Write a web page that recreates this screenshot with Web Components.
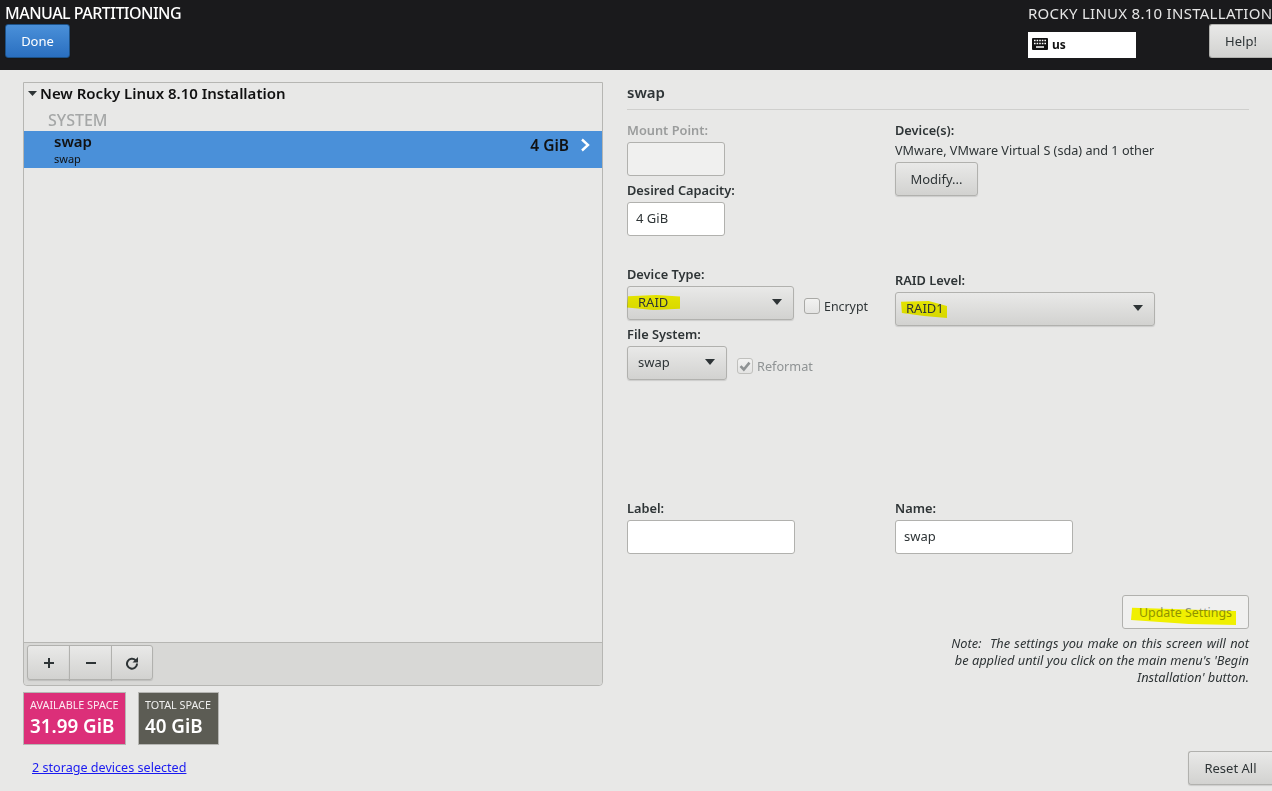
<!DOCTYPE html>
<html lang="en">
<head>
<meta charset="utf-8">
<title>Manual Partitioning</title>
<style>
html,body {margin:0; height:100%;}
body {font:13px "Noto Sans",sans-serif; color:#2e3436; overflow:hidden; background:#e8e8e7;}
</style>
</head>
<body>
<manual-partitioning>
    <top-bar slot="top"></top-bar>
    <mount-pane slot="left"></mount-pane>
    <space-tile slot="tiles" tone="#dc2f79" caption="AVAILABLE SPACE" amount="31.99 GiB" style="width:103px"></space-tile>
    <space-tile slot="tiles" tone="#5c5c54" caption="TOTAL SPACE" amount="40 GiB" style="width:81px"></space-tile>
    <details-pane slot="right"></details-pane>
</manual-partitioning>

<script>
const BUTTON_BG = 'linear-gradient(#e9e9e8,#d2d2d0)';

customElements.define('gtk-button', class extends HTMLElement {
    constructor() {
        super();
        this.attachShadow({ mode: 'open' }).innerHTML = `
        <style>
        :host {
            display:inline-flex; align-items:center; justify-content:center; box-sizing:border-box;
            position:relative;
            height:34px;
            border:1px solid #b1b1ae; border-radius:3px;
            background:${BUTTON_BG};
            box-shadow:0 1px 1px #0000001f;
            color:#2e3436;
        }
        :host([tone=blue]) {
            background:linear-gradient(#4a90d9,#2a6fc0);
            border-color:#1c5187; color:#fff;
        }
        :host([disabled]) {
            background:#f0f0ef; color:#8f9394; box-shadow:none;
        }
        :host([cut]) {
            border-right:0; border-radius:3px 0 0 3px;
        }
        </style>
        <slot></slot>`;
    }
});

customElements.define('gtk-combo', class extends HTMLElement {
    constructor() {
        super();
        this.attachShadow({ mode: 'open' }).innerHTML = `
        <style>
        :host {
            display:flex; align-items:center; box-sizing:border-box;
            position:relative;
            height:34px; padding:0 11px 2px 10px;
            border:1px solid #b1b1ae; border-radius:3px;
            background:${BUTTON_BG};
            box-shadow:0 1px 1px #0000001f;
        }
        span {flex:1; position:relative;}
        svg {width:10px; height:6px; fill:#2e3436; position:relative;}
        </style>
        <slot name="mark"></slot>
        <span><slot></slot></span>
        <svg viewBox="0 0 10 6"><path d="M0 0H10L5 6Z"/></svg>`;
    }
});

customElements.define('gtk-entry', class extends HTMLElement {
    constructor() {
        super();
        this.attachShadow({ mode: 'open' }).innerHTML = `
        <style>
        :host {
            display:flex; align-items:center; box-sizing:border-box;
            height:34px; padding:0 8px 2px;
            border:1px solid #b1b1ae; border-radius:3px;
            background:#fff; color:#2e3436;
        }
        :host([disabled]) {background:#f0f0ef;}
        </style>
        <slot></slot>`;
    }
});

customElements.define('form-field', class extends HTMLElement {
    constructor() {
        super();
        this.attachShadow({ mode: 'open' }).innerHTML = `
        <style>
        :host {display:flex; flex-direction:column; gap:4px; align-items:flex-start;}
        b {display:block; font-weight:600; font-size:12.800px; line-height:16px; color:#2e3436;}
        :host([disabled]) b {color:#9a9c9c;}
        </style>
        <b></b>
        <slot></slot>`;
    }
    connectedCallback() {
        this.shadowRoot.querySelector('b').textContent = this.getAttribute('label');
    }
});

customElements.define('gtk-check', class extends HTMLElement {
    constructor() {
        super();
        this.attachShadow({ mode: 'open' }).innerHTML = `
        <style>
        :host {display:inline-flex; align-items:center; gap:4px; color:#2e3436; font-size:12.400px;}
        :host([disabled]) {color:#8f9394; font-size:12.700px;}
        i {
            display:flex; align-items:center; justify-content:center; box-sizing:border-box;
            width:16px; height:16px;
            border:1px solid #a9a9a6; border-radius:3px;
            background:linear-gradient(#f2f2f1,#e4e4e3);
        }
        svg {width:12px; height:12px; display:none;}
        :host([checked]) svg {display:block;}
        :host([disabled]) i {border-color:#c0c0bd;}
        </style>
        <i><svg viewBox="0 0 12 12"><path d="M1.5 6.2 4.8 9.5 10.5 2.6" fill="none" stroke="#8f9394" stroke-width="2.6"/></svg></i>
        <slot></slot>`;
    }
});

// yellow highlighter strokes painted on top of the screenshot
customElements.define('marker-stroke', class extends HTMLElement {
    constructor() {
        super();
        this.attachShadow({ mode: 'open' }).innerHTML = `
        <style>
        :host {
            position:absolute; display:block; left:var(--x); top:var(--y);
            width:var(--w); height:var(--h);
            background:#ffff00; mix-blend-mode:multiply;
            clip-path:var(--shape);
        }
        </style>`;
    }
});

customElements.define('top-bar', class extends HTMLElement {
    constructor() {
        super();
        this.attachShadow({ mode: 'open' }).innerHTML = `
        <style>
        :host {
            display:flex; justify-content:space-between; box-sizing:border-box;
            height:70px; padding:4px 0 0 5px;
            background:#1a1a1c; color:#fff;
        }
        h1,h2 {margin:0; line-height:18px; white-space:nowrap;}
        h1 {font-size:16px; font-weight:500; letter-spacing:-.52px;}
        h2 {font-size:15px; font-weight:400; color:#e6e6e6; letter-spacing:.28px;}
        .side {width:244px; overflow:hidden;}
        .row {display:flex; align-items:flex-end; justify-content:space-between; margin-top:2px;}
        .kbd {
            display:flex; align-items:center; gap:4px; box-sizing:border-box;
            width:108px; height:26px; padding:0 0 2px 4px;
            background:#fff; color:#111; font-size:12px; font-weight:700;
        }
        svg {width:16px; height:12px; display:block;}
        gtk-button {font-size:13px;}
        .done {width:65px; margin-top:2px;}
        .help {width:63px;}
        </style>
        <div>
            <h1>MANUAL PARTITIONING</h1>
            <gtk-button class="done" tone="blue">Done</gtk-button>
        </div>
        <div class="side">
            <h2>ROCKY LINUX 8.10 INSTALLATION</h2>
            <div class="row">
                <div class="kbd">
                    <svg viewBox="0 0 16 12">
                        <rect width="16" height="12" rx="1" fill="#111"/>
                        <path d="M2 2.5h1.6M4.6 2.5h1.6M7.2 2.5h1.6M9.8 2.5h1.6M12.4 2.5h1.6M2 5.5h1.6M4.6 5.5h1.6M7.2 5.5h1.6M9.8 5.5h1.6M12.4 5.5h1.6M4 9h8" stroke="#fff" stroke-width="1.5" fill="none"/>
                    </svg>
                    <span>us</span>
                </div>
                <gtk-button class="help" cut>Help!</gtk-button>
            </div>
        </div>`;
    }
});

customElements.define('mount-pane', class extends HTMLElement {
    constructor() {
        super();
        this.attachShadow({ mode: 'open' }).innerHTML = `
        <style>
        :host {
            display:flex; flex-direction:column; box-sizing:border-box;
            height:604px;
            border:1px solid #b6b6b3; border-radius:0 0 4px 4px;
            color:#111;
        }
        .root {
            display:flex; align-items:center; gap:3px;
            height:22px; padding:0 0 2px 4px; box-sizing:border-box;
            font-size:15px; font-weight:600; color:#111;
        }
        .root svg {width:9px; height:5px; fill:#2e3436;}
        .group {
            height:26px; padding-left:24px; box-sizing:border-box;
            font-size:16px; font-weight:500; line-height:30px; color:#a5a7a7;
        }
        .sel {
            display:flex; align-items:center; justify-content:space-between;
            height:37px; padding:0 12px 0 30px; box-sizing:border-box;
            background:#4a90d9;
        }
        .sel div {display:flex; flex-direction:column;}
        .sel b {font-size:15px; font-weight:600; line-height:19px; margin-top:-2px;}
        .sel small {font-size:11px; line-height:14px; margin-top:1px;}
        .size {display:flex; align-items:center; gap:11px; padding-bottom:9px; font-size:15.500px; font-weight:600;}
        .size svg {width:10px; height:14px; display:block;}
        .space {flex:1;}
        .tools {
            display:flex; align-items:flex-start; box-sizing:border-box;
            height:43px; padding:2px 0 0 3px;
            border-top:1px solid #b6b6b3;
            background:#d8d8d6; border-radius:0 0 4px 4px;
        }
        gtk-button {width:43px; height:35px; margin-right:-1px; border-radius:0;}
        gtk-button:first-child {border-radius:3px 0 0 3px;}
        gtk-button:last-child {width:42px; border-radius:0 3px 3px 0;}
        gtk-button svg {width:14px; height:14px; display:block;}
        </style>
        <div class="root"><svg viewBox="0 0 9 5"><path d="M0 0H9L4.500 5Z"/></svg>New Rocky Linux 8.10 Installation</div>
        <div class="group">SYSTEM</div>
        <div class="sel">
            <div><b>swap</b><small>swap</small></div>
            <span class="size">4 GiB
                <svg viewBox="0 0 10 14"><path d="M2 1.500 8 7 2 12.500" fill="none" stroke="#fff" stroke-width="2.400"/></svg>
            </span>
        </div>
        <div class="space"></div>
        <div class="tools">
            <gtk-button><svg viewBox="0 0 14 14"><path d="M7 2v10M2 7h10" stroke="#2e3436" stroke-width="2" fill="none"/></svg></gtk-button>
            <gtk-button><svg viewBox="0 0 14 14"><path d="M2 7h10" stroke="#2e3436" stroke-width="2" fill="none"/></svg></gtk-button>
            <gtk-button><svg viewBox="0 0 14 14"><path d="M10.600 4.200A5 5 0 1 0 12 7.500" stroke="#2e3436" stroke-width="2" fill="none"/><path d="M13 1v5.500H7.500Z" fill="#2e3436"/></svg></gtk-button>
        </div>`;
    }
});

customElements.define('space-tile', class extends HTMLElement {
    constructor() {
        super();
        this.attachShadow({ mode: 'open' }).innerHTML = `
        <style>
        :host {
            display:flex; flex-direction:column; box-sizing:border-box;
            height:53px; padding:5px 6px 0 6px;
            border:1px solid #b6b6b3;
            color:#fff; white-space:nowrap;
        }
        small {font-size:10.800px; line-height:14px; opacity:.9;}
        b {font-size:18.800px; font-weight:600; line-height:26px; margin-top:1px;}
        </style>
        <small></small><b></b>`;
    }
    connectedCallback() {
        this.style.background = this.getAttribute('tone');
        this.shadowRoot.querySelector('small').textContent = this.getAttribute('caption');
        this.shadowRoot.querySelector('b').textContent = this.getAttribute('amount');
    }
});

customElements.define('details-pane', class extends HTMLElement {
    constructor() {
        super();
        this.attachShadow({ mode: 'open' }).innerHTML = `
        <style>
        :host {display:flex; flex-direction:column; flex:1; font-size:13px;}
        h3 {
            margin:0; padding-bottom:7px;
            font-size:15px; font-weight:600; line-height:20px; color:#2e3436;
            border-bottom:1px solid #cfcfcd;
        }
        .form {display:grid; grid-template-columns:268px 1fr; margin-top:12px;}
        .col {display:flex; flex-direction:column;}
        .line {display:flex; align-items:center;}
        .hint {font-size:12.650px; line-height:16px; white-space:nowrap;}
        .update {align-self:flex-end; width:127px; margin-top:41px; font-size:12.400px;}
        .note {margin:6px 0 0; font-style:italic; font-size:12.800px; line-height:17px; text-align:right; width:310px; align-self:flex-end; color:#2e3436;}
        .note::first-line {word-spacing:.9px;}
        .reset {align-self:flex-end; width:84px; margin:auto -23px 6px 0;}
        </style>
        <h3>swap</h3>
        <div class="form">
            <div class="col">
                <form-field label="Mount Point:" disabled><gtk-entry disabled style="width:98px"></gtk-entry></form-field>
                <form-field label="Desired Capacity:" style="margin-top:6px"><gtk-entry style="width:98px">4 GiB</gtk-entry></form-field>
                <form-field label="Device Type:" style="margin-top:30px">
                    <div class="line">
                        <gtk-combo style="width:167px">RAID
                            <marker-stroke slot="mark" style="--x:-1px;--y:8px;--w:53px;--h:15px;--shape:polygon(2% 8%,55% 0,100% 10%,100% 92%,50% 100%,0 84%)"></marker-stroke>
                        </gtk-combo>
                        <gtk-check style="margin:0 0 -6px 10px">Encrypt</gtk-check>
                    </div>
                </form-field>
                <form-field label="File System:" style="margin-top:6px">
                    <div class="line">
                        <gtk-combo style="width:100px">swap</gtk-combo>
                        <gtk-check checked disabled style="margin:0 0 -6px 10px">Reformat</gtk-check>
                    </div>
                </form-field>
                <form-field label="Label:" style="margin-top:120px"><gtk-entry style="width:168px"></gtk-entry></form-field>
            </div>
            <div class="col">
                <form-field label="Device(s):">
                    <span class="hint">VMware, VMware Virtual S (sda) and 1 other</span>
                    <gtk-button style="width:83px">Modify...</gtk-button>
                </form-field>
                <form-field label="RAID Level:" style="margin-top:76px">
                    <gtk-combo style="width:260px">RAID1
                        <marker-stroke slot="mark" style="--x:5px;--y:8px;--w:46px;--h:17px;--shape:polygon(0 5%,60% 0,100% 30%,100% 100%,50% 88%,2% 70%)"></marker-stroke>
                    </gtk-combo>
                </form-field>
                <form-field label="Name:" style="margin-top:174px"><gtk-entry style="width:178px">swap</gtk-entry></form-field>
            </div>
        </div>
        <gtk-button class="update" disabled>Update Settings
            <marker-stroke style="--x:8px;--y:11px;--w:105px;--h:18px;--shape:polygon(1% 4%,100% 22%,100% 100%,55% 95%,0 72%)"></marker-stroke>
        </gtk-button>
        <p class="note">Note:&nbsp; The settings you make on this screen will not be applied until you click on the main menu's 'Begin Installation' button.</p>
        <gtk-button class="reset" cut>Reset All</gtk-button>`;
    }
});

customElements.define('manual-partitioning', class extends HTMLElement {
    constructor() {
        super();
        this.attachShadow({ mode: 'open' }).innerHTML = `
        <style>
        :host {display:flex; flex-direction:column; height:791px;}
        main {flex:1; display:flex; min-height:0;}
        .left {display:flex; flex-direction:column; width:580px; margin:12px 0 0 23px;}
        .tiles {display:flex; gap:12px; margin-top:6px;}
        .link {margin:14px 0 0 9px; color:#1a1af0; text-decoration:underline; font-size:12.600px; line-height:17px;}
        .right {display:flex; flex-direction:column; flex:1; min-width:0; margin:12px 23px 0 24px;}
        </style>
        <slot name="top"></slot>
        <main>
            <div class="left">
                <slot name="left"></slot>
                <div class="tiles"><slot name="tiles"></slot></div>
                <a class="link">2 storage devices selected</a>
            </div>
            <div class="right"><slot name="right"></slot></div>
        </main>`;
    }
});
</script>
</body>
</html>
